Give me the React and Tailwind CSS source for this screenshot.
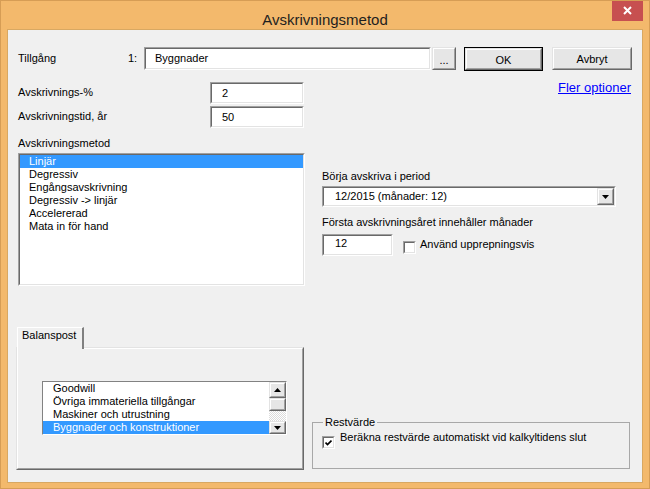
import React from 'react';

const methods = ['Linjär', 'Degressiv', 'Engångsavskrivning', 'Degressiv -> linjär', 'Accelererad', 'Mata in för hand'];
const posts = ['Goodwill', 'Övriga immateriella tillgångar', 'Maskiner och utrustning', 'Byggnader och konstruktioner'];

// classic 3D borders
function Sunken({ className = '', inner = '', children }) {
  return (
    <div className={`border border-t-[#a0a0a0] border-l-[#a0a0a0] border-b-white border-r-white ${className}`}>
      <div className={`h-full w-full border border-t-[#696969] border-l-[#696969] border-b-[#e3e3e3] border-r-[#e3e3e3] bg-white ${inner}`}>
        {children}
      </div>
    </div>
  );
}

function Raised({ className = '', inner = '', children }) {
  return (
    <div className={`border border-t-[#e3e3e3] border-l-[#e3e3e3] border-b-[#696969] border-r-[#696969] ${className}`}>
      <div className={`flex h-full w-full items-center justify-center border border-t-white border-l-white border-b-[#a0a0a0] border-r-[#a0a0a0] bg-[#e6e6e6] ${inner}`}>
        {children}
      </div>
    </div>
  );
}

function Arrow({ up = false }) {
  return (
    <svg width="7" height="4" viewBox="0 0 7 4">
      <polygon points={up ? '0,4 7,4 3.5,0' : '0,0 7,0 3.5,4'} fill="#000" />
    </svg>
  );
}

function CheckBox({ checked = false, className = '' }) {
  return (
    <Sunken className={`h-[13px] w-[13px] shrink-0 ${className}`} inner="flex items-center justify-center">
      {checked && (
        <svg width="7" height="7" viewBox="0 0 7 7">
          <path d="M0.5 3.5 L2.5 5.5 L6.5 1.5" stroke="#000" strokeWidth="1.7" fill="none" />
        </svg>
      )}
    </Sunken>
  );
}

export default function App() {
  return (
    <div className="relative h-[489px] w-[650px] overflow-hidden border border-[#d69d55] bg-[#f3b96c] font-['Liberation_Sans',Arial,sans-serif] text-[11px] leading-[13px] text-black select-none">
      {/* Title bar */}
      <div className="h-[28px] pt-[10px] text-center text-[15px] leading-[18px] text-[#1f1f1f]">Avskrivningsmetod</div>
      <div className="absolute right-[6px] top-[-1px] flex h-[21px] w-[31px] items-center justify-center bg-[#c75050]">
        <svg width="9" height="9" viewBox="0 0 9 9">
          <path d="M1 1 L8 8 M8 1 L1 8" stroke="#fff" strokeWidth="2" />
        </svg>
      </div>

      {/* Client area */}
      <div className="ml-[6px] flex h-[454px] w-[636px] flex-col border border-[#d8a862] bg-[#f0f0f0]">
        {/* Tillgång row */}
        <div className="mt-[17px] flex h-[23px] items-start">
          <div className="ml-[10px] w-[110px] pt-[5px]">Tillgång</div>
          <div className="w-[16px] pt-[5px]">1:</div>
          <Sunken className="h-[23px] w-[287px]" inner="flex items-center pl-[9px]">Byggnader</Sunken>
          <Raised className="ml-[1px] h-[23px] w-[24px]" inner="pt-[3px]">...</Raised>
          <div className="ml-[8px] h-[24px] w-[79px] border border-black">
            <Raised className="h-full w-full" inner="pt-[2px]">OK</Raised>
          </div>
          <Raised className="ml-[9px] h-[23px] w-[80px]" inner="pt-[2px]">Avbryt</Raised>
        </div>

        <div className="mt-[10px] flex">
          {/* Left column */}
          <div className="ml-[8px] flex w-[289px] flex-col pt-[2px]">
            <div className="flex h-[22px] items-start pl-[2px]">
              <div className="w-[192px] pt-[4px]">Avskrivnings-%</div>
              <Sunken className="h-[22px] w-[94px]" inner="flex items-center pl-[10px]">2</Sunken>
            </div>
            <div className="mt-[2px] flex h-[22px] items-start pl-[2px]">
              <div className="w-[192px] pt-[4px]">Avskrivningstid, år</div>
              <Sunken className="h-[22px] w-[94px]" inner="flex items-center pl-[10px]">50</Sunken>
            </div>
            <div className="ml-[2px] mt-[9px]">Avskrivningsmetod</div>
            <Sunken className="ml-[2px] mt-[3px] h-[133px] w-[287px]" inner="overflow-hidden">
              {methods.map((m, i) => (
                <div
                  key={m}
                  className={`h-[13px] whitespace-nowrap pl-[9px] ${i === 0 ? 'bg-[#3399ff] text-white' : ''}`}
                >
                  {m}
                </div>
              ))}
            </Sunken>

            {/* Balanspost tab */}
            <div className="relative z-10 -mb-[2px] ml-[1px] mt-[41px] h-[22px] w-[67px] border-l border-r-2 border-t border-l-white border-r-[#808080] border-t-white bg-[#f0f0f0] pl-[4px] pt-[1px]">
              Balanspost
            </div>
            <div className="h-[123px] w-[288px] border border-t-[#e3e3e3] border-l-[#e3e3e3] border-b-[#696969] border-r-[#696969]">
              <div className="h-full w-full border border-t-white border-l-white border-b-[#a0a0a0] border-r-[#a0a0a0] pl-[24px] pt-[32px]">
                <div className="flex h-[54px] w-[245px] border border-t-[#828282] border-l-[#828282] border-b-white border-r-white bg-white">
                  <div className="flex-1 overflow-hidden">
                    {posts.map((p, i) => (
                      <div
                        key={p}
                        className={`h-[13px] whitespace-nowrap pl-[10px] ${i === 3 ? 'bg-[#3399ff] text-white' : ''}`}
                      >
                        {p}
                      </div>
                    ))}
                  </div>
                  <div className="flex w-[17px] flex-col">
                    <Raised className="h-[16px] w-full"><Arrow up /></Raised>
                    <Raised className="h-[13px] w-full" />
                    <div className="h-[10px] bg-[image:repeating-conic-gradient(#ffffff_0%_25%,#dcdcdc_0%_50%)] bg-[length:2px_2px]" />
                    <Raised className="h-[13px] w-full"><Arrow /></Raised>
                  </div>
                </div>
              </div>
            </div>
          </div>

          {/* Right column */}
          <div className="ml-[7px] flex w-[320px] flex-col">
            <a className="mr-[1px] self-end text-[13px] leading-[15px] text-[#0000ff] underline">Fler optioner</a>
            <div className="ml-[10px] mt-[75px]">Börja avskriva i period</div>
            <Sunken className="ml-[10px] mt-[3px] h-[21px] w-[294px]" inner="flex">
              <div className="flex flex-1 items-center pl-[11px]">12/2015 (månader: 12)</div>
              <Raised className="h-full w-[17px]"><Arrow /></Raised>
            </Sunken>
            <div className="ml-[10px] mt-[9px]">Första avskrivningsåret innehåller månader</div>
            <div className="ml-[10px] mt-[5px] flex h-[22px] items-start">
              <Sunken className="h-[22px] w-[71px]" inner="pl-[11px] pt-[1px]">12</Sunken>
              <CheckBox className="ml-[10px] mt-[7px]" />
              <div className="ml-[4px] pt-[4px]">Använd upprepningsvis</div>
            </div>

            <fieldset className="mt-[160px] h-[53px] w-[318px] border border-[#a8a8a8]">
              <legend className="ml-[10px] px-[2px]">Restvärde</legend>
              <div className="flex items-start">
                <CheckBox checked className="ml-[9px] mt-[7px]" />
                <div className="ml-[5px] mt-[2px] whitespace-nowrap">Beräkna restvärde automatiskt vid kalkyltidens slut</div>
              </div>
            </fieldset>
          </div>
        </div>
      </div>
    </div>
  );
}
